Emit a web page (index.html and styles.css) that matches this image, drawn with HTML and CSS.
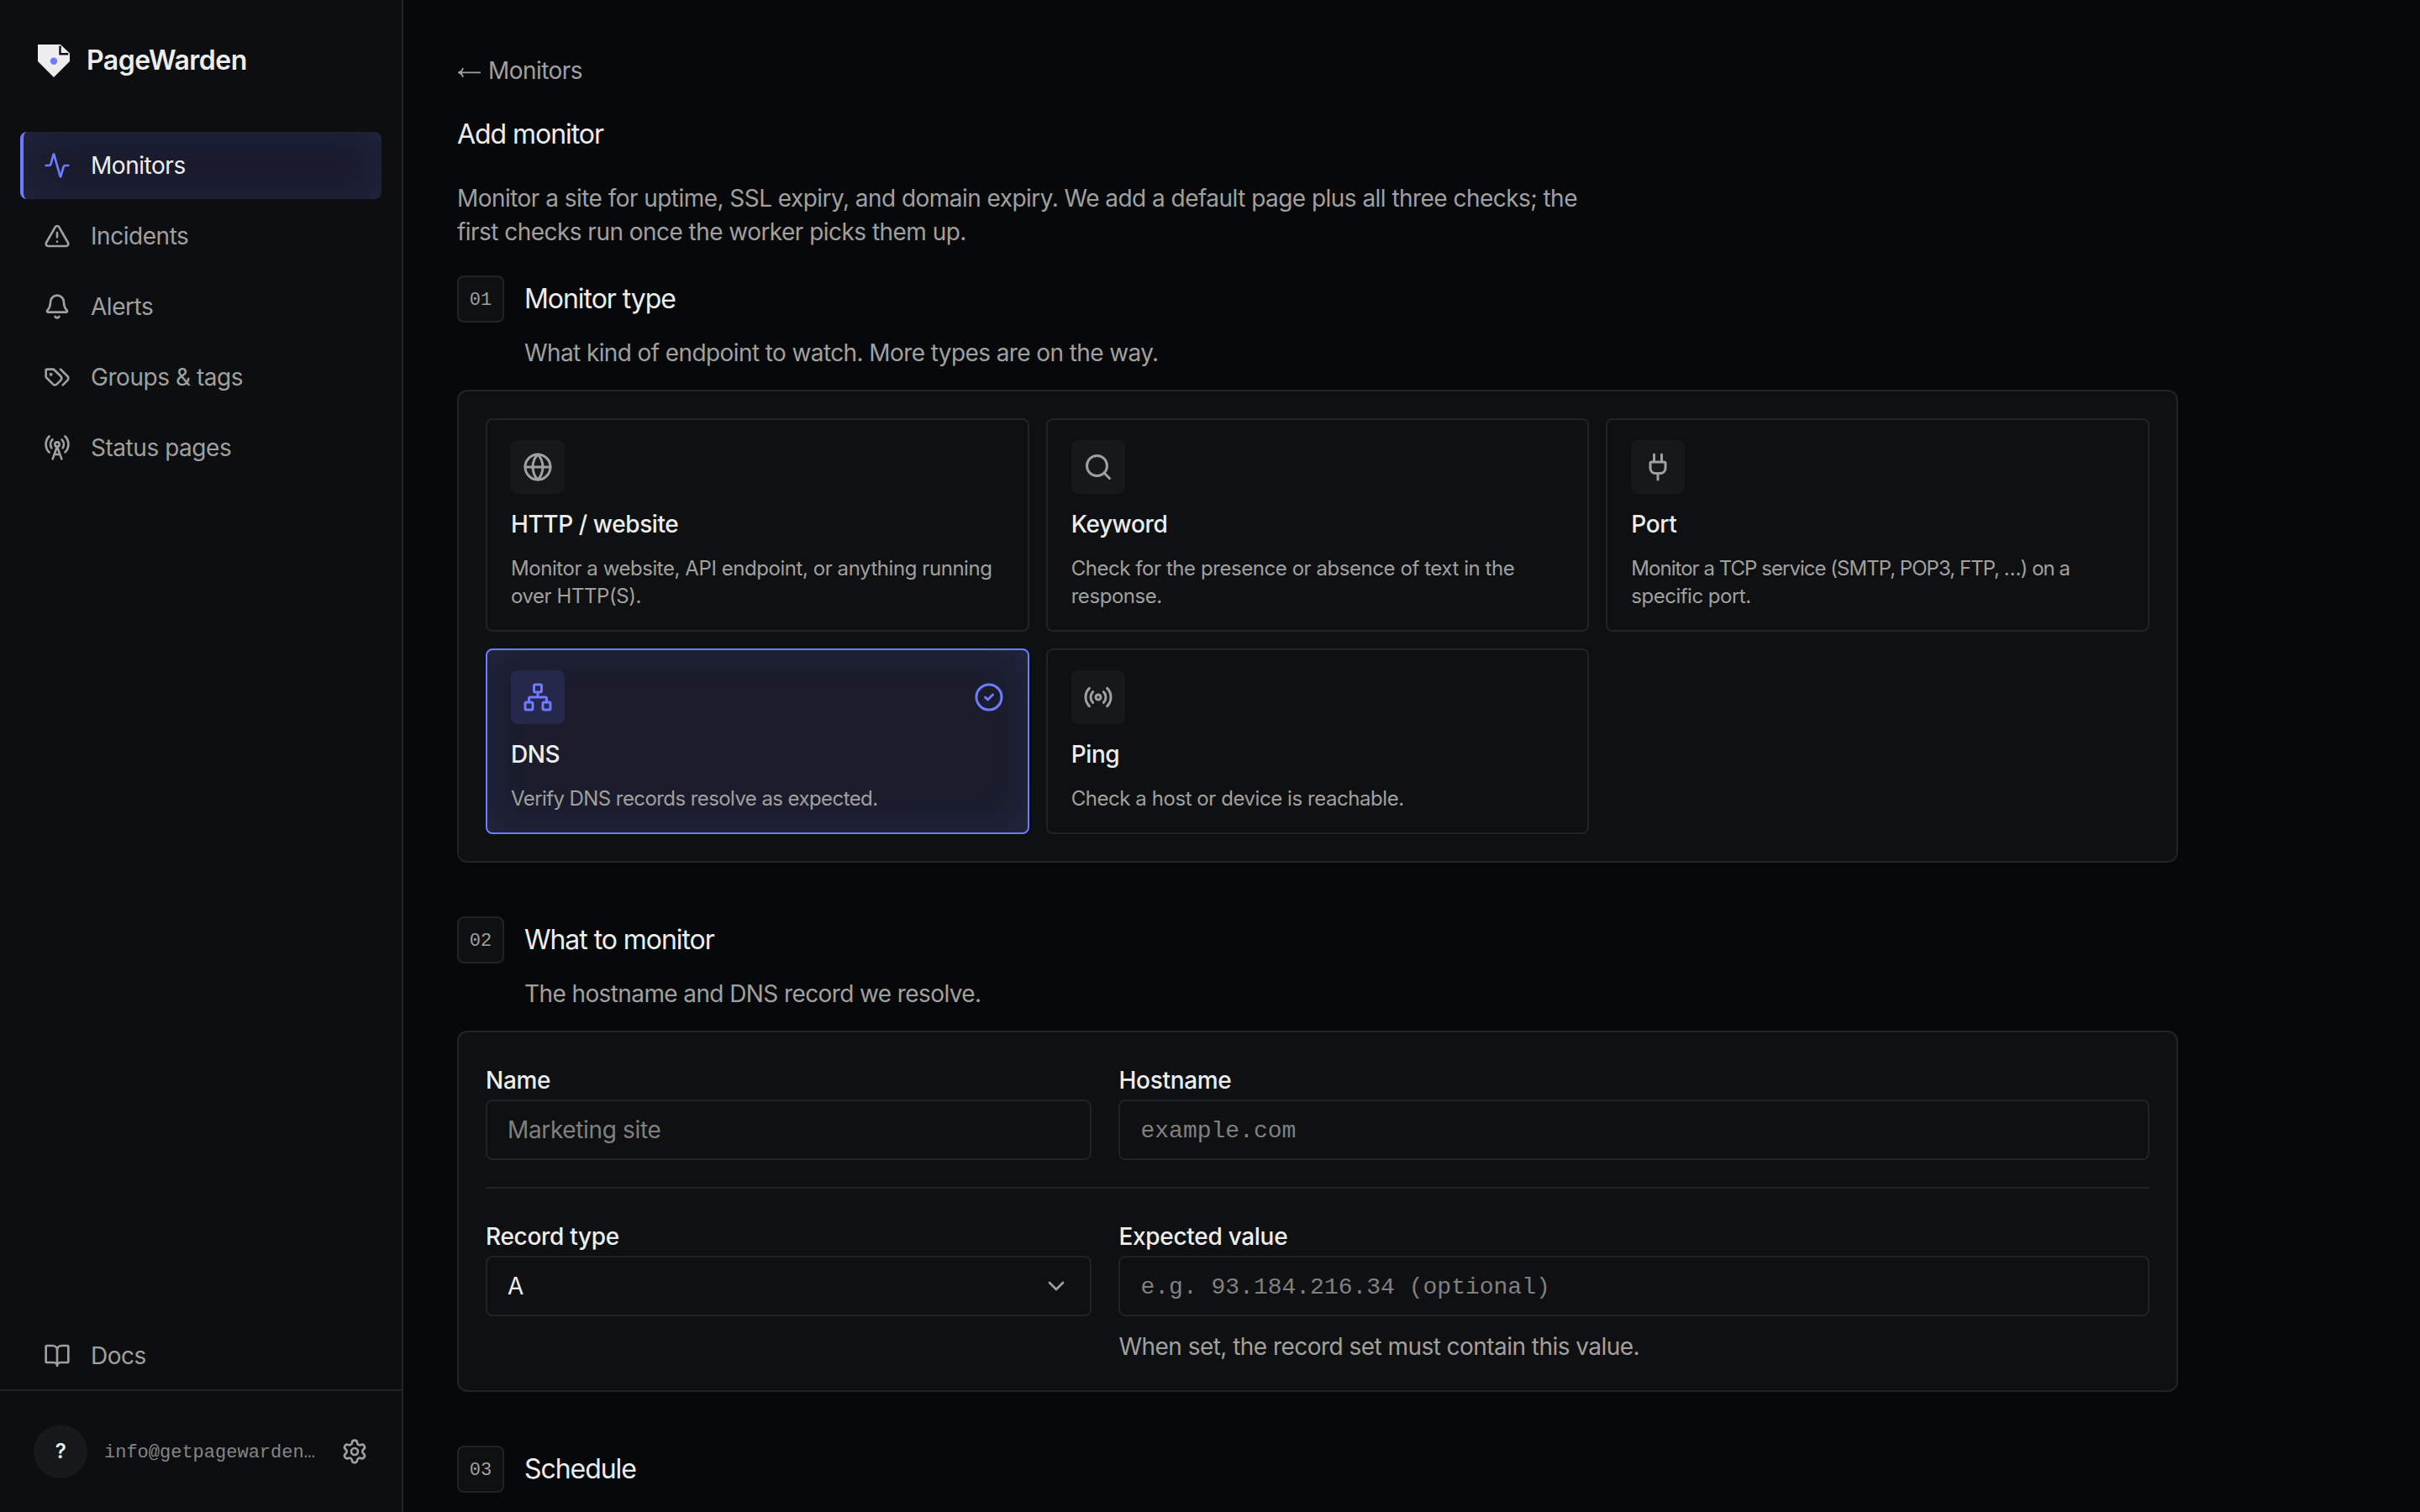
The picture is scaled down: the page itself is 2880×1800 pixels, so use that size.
FILE: index.html
```html
<!DOCTYPE html>
<html lang="en">
  <head>
    <meta charset="UTF-8" />
    <meta name="viewport" content="width=device-width, initial-scale=1.0" />
    <title>Add monitor - PageWarden</title>
    <link rel="stylesheet" href="styles.css">
  </head>
  <body>
    <aside class="sidebar">
      <a class="brand" href="#">
        <svg class="brand-mark" viewBox="0 0 40 40">
          <path d="M1 1h27l11 10.5V21L20 40 1 21z" fill="#ededed" />
          <path d="M27.5 2.6v9.6h9.8" fill="none" stroke="#0c0e0f" stroke-width="2.4" />
          <circle cx="20" cy="20.7" r="4.2" fill="#6e7bff" />
        </svg>
        <span class="brand-name">PageWarden</span>
      </a>

      <nav class="nav">
        <a class="nav-item active" href="#">
          <svg class="icon" viewBox="0 0 24 24"><path d="M22 12h-2.48a2 2 0 0 0-1.93 1.46l-2.35 8.36a.25.25 0 0 1-.48 0L9.24 2.18a.25.25 0 0 0-.48 0l-2.35 8.36A2 2 0 0 1 4.49 12H2" /></svg>
          <span>Monitors</span>
        </a>
        <a class="nav-item" href="#">
          <svg class="icon" viewBox="0 0 24 24"><path d="m21.73 18-8-14a2 2 0 0 0-3.48 0l-8 14A2 2 0 0 0 4 21h16a2 2 0 0 0 1.73-3M12 9v4M12 17h.01" /></svg>
          <span>Incidents</span>
        </a>
        <a class="nav-item" href="#">
          <svg class="icon" viewBox="0 0 24 24"><path d="M10.268 21a2 2 0 0 0 3.464 0M3.262 15.326A1 1 0 0 0 4 17h16a1 1 0 0 0 .74-1.673C19.41 13.956 18 12.499 18 8A6 6 0 0 0 6 8c0 4.499-1.411 5.956-2.738 7.326" /></svg>
          <span>Alerts</span>
        </a>
        <a class="nav-item" href="#">
          <svg class="icon" viewBox="0 0 24 24"><path d="m15 5 6.3 6.3a2.4 2.4 0 0 1 0 3.4L17 19M9.586 5.586A2 2 0 0 0 8.172 5H3a1 1 0 0 0-1 1v5.172a2 2 0 0 0 .586 1.414L8.29 18.29a2.426 2.426 0 0 0 3.42 0l3.58-3.58a2.426 2.426 0 0 0 0-3.42z" /><circle cx="6.5" cy="9.5" r=".5" fill="currentColor" /></svg>
          <span>Groups &amp; tags</span>
        </a>
        <a class="nav-item" href="#">
          <svg class="icon" viewBox="0 0 24 24"><path d="M4.9 16.1C1 12.2 1 5.8 4.9 1.9M7.8 4.7a6.14 6.14 0 0 0-.8 7.5M16.2 4.8c2 2 2.26 5.11.8 7.47M19.1 1.9a9.96 9.96 0 0 1 0 14.1M9.5 18h5M8 22l4-11 4 11" /><circle cx="12" cy="9" r="2" /></svg>
          <span>Status pages</span>
        </a>
      </nav>

      <a class="nav-item docs" href="#">
        <svg class="icon" viewBox="0 0 24 24"><path d="M12 7v14M3 18a1 1 0 0 1-1-1V4a1 1 0 0 1 1-1h5a4 4 0 0 1 4 4 4 4 0 0 1 4-4h5a1 1 0 0 1 1 1v13a1 1 0 0 1-1 1h-6a3 3 0 0 0-3 3 3 3 0 0 0-3-3z" /></svg>
        <span>Docs</span>
      </a>

      <div class="account">
        <span class="avatar">?</span>
        <span class="email">info@getpagewarden…</span>
        <svg class="icon" viewBox="0 0 24 24"><path d="M9.671 4.136a2.34 2.34 0 0 1 4.659 0 2.34 2.34 0 0 0 3.319 1.915 2.34 2.34 0 0 1 2.33 4.033 2.34 2.34 0 0 0 0 3.831 2.34 2.34 0 0 1-2.33 4.033 2.34 2.34 0 0 0-3.319 1.915 2.34 2.34 0 0 1-4.659 0 2.34 2.34 0 0 0-3.32-1.915 2.34 2.34 0 0 1-2.33-4.033 2.34 2.34 0 0 0 0-3.831A2.34 2.34 0 0 1 6.35 6.051a2.34 2.34 0 0 0 3.319-1.915" /><circle cx="12" cy="12" r="3" /></svg>
      </div>
    </aside>

    <main class="main">
      <a class="back" href="#">
        <svg class="back-arrow" viewBox="0 0 28 40"><path d="M28 22.4H1.5M7 17c-.6 2.800-2.500 4.700-5.500 5.400 3 .7 4.900 2.600 5.500 5.400" /></svg>
        Monitors
      </a>
      <h1>Add monitor</h1>
      <p class="intro">
        Monitor a site for uptime, SSL expiry, and domain expiry. We add a
        default page plus all three checks; the first checks run once the
        worker picks them up.
      </p>

      <section class="step">
        <div class="step-head">
          <span class="step-num">01</span>
          <h2>Monitor type</h2>
        </div>
        <p class="step-sub">What kind of endpoint to watch. More types are on the way.</p>

        <div class="panel types">
          <div class="type">
            <span class="tile"><svg class="icon" viewBox="0 0 24 24"><circle cx="12" cy="12" r="10" /><path d="M12 2a14.5 14.5 0 0 0 0 20 14.5 14.5 0 0 0 0-20M2 12h20" /></svg></span>
            <h3>HTTP / website</h3>
            <p>Monitor a website, API endpoint, or anything running over HTTP(S).</p>
          </div>
          <div class="type">
            <span class="tile"><svg class="icon" viewBox="0 0 24 24"><circle cx="11" cy="11" r="8" /><path d="m21 21-4.34-4.34" /></svg></span>
            <h3>Keyword</h3>
            <p>Check for the presence or absence of text in the response.</p>
          </div>
          <div class="type">
            <span class="tile"><svg class="icon" viewBox="0 0 24 24"><path d="M12 22v-5M15 8V2M17 8a1 1 0 0 1 1 1v4a4 4 0 0 1-4 4h-4a4 4 0 0 1-4-4V9a1 1 0 0 1 1-1zM9 8V2" /></svg></span>
            <h3>Port</h3>
            <p class="caps">Monitor a TCP service (SMTP, POP3, FTP, …) on a <span class="line">specific port.</span></p>
          </div>
          <div class="type selected">
            <div class="type-top">
              <span class="tile"><svg class="icon" viewBox="0 0 24 24"><rect x="16" y="16" width="6" height="6" rx="1" /><rect x="2" y="16" width="6" height="6" rx="1" /><rect x="9" y="2" width="6" height="6" rx="1" /><path d="M5 16v-3a1 1 0 0 1 1-1h12a1 1 0 0 1 1 1v3M12 12V8" /></svg></span>
              <svg class="icon" viewBox="0 0 24 24"><circle cx="12" cy="12" r="10" /><path d="m9 12 2 2 4-4" /></svg>
            </div>
            <h3>DNS</h3>
            <p>Verify DNS records resolve as expected.</p>
          </div>
          <div class="type">
            <span class="tile"><svg class="icon" viewBox="0 0 24 24"><path d="M16.247 7.761a6 6 0 0 1 0 8.478M19.075 4.933a10 10 0 0 1 0 14.134M4.925 19.067a10 10 0 0 1 0-14.134M7.753 16.239a6 6 0 0 1 0-8.478" /><circle cx="12" cy="12" r="2" /></svg></span>
            <h3>Ping</h3>
            <p>Check a host or device is reachable.</p>
          </div>
        </div>
      </section>

      <section class="step">
        <div class="step-head">
          <span class="step-num">02</span>
          <h2>What to monitor</h2>
        </div>
        <p class="step-sub">The hostname and DNS record we resolve.</p>

        <div class="panel">
          <div class="fields">
            <div class="field">
              <label>Name</label>
              <div class="control placeholder">Marketing site</div>
            </div>
            <div class="field">
              <label>Hostname</label>
              <div class="control placeholder mono">example.com</div>
            </div>
          </div>
          <div class="fields">
            <div class="field">
              <label>Record type</label>
              <div class="control">
                A
                <svg class="icon" viewBox="0 0 24 24"><path d="m6 9 6 6 6-6" /></svg>
              </div>
            </div>
            <div class="field">
              <label>Expected value</label>
              <div class="control placeholder mono">e.g. 93.184.216.34 (optional)</div>
              <p class="help">When set, the record set must contain this value.</p>
            </div>
          </div>
        </div>
      </section>

      <section class="step">
        <div class="step-head">
          <span class="step-num">03</span>
          <h2>Schedule</h2>
        </div>
      </section>
    </main>
  </body>
</html>
```
FILE: styles.css
```css
* {
  margin: 0;
  padding: 0;
  box-sizing: border-box;
}

body {
  display: flex;
  height: 100vh;
  overflow: hidden;
  background-color: #07080a;
  color: #ededed;
  font-family: Inter, "Liberation Sans", sans-serif;
  font-size: 28px;
  line-height: 40px;
  letter-spacing: -0.54px;
}

a {
  color: inherit;
  text-decoration: none;
}

.icon {
  flex: none;
  width: 32px;
  height: 32px;
  fill: none;
  stroke: currentColor;
  stroke-width: 2;
  stroke-linecap: round;
  stroke-linejoin: round;
}

/* Sidebar */
.sidebar {
  display: flex;
  flex-direction: column;
  flex: none;
  width: 480px;
  background-color: #0c0e0f;
  border-right: 2px solid #212325;
}

.brand {
  display: flex;
  align-items: center;
  gap: 19px;
  padding: 52px 44px 65px;
}

.brand-mark {
  width: 40px;
  height: 40px;
}

.brand-name {
  font-size: 32px;
  font-weight: 600;
  letter-spacing: -0.5px;
}

.nav {
  display: flex;
  flex-direction: column;
  gap: 4px;
  padding-right: 24px;
  margin-bottom: auto;
}

.nav-item {
  display: flex;
  align-items: center;
  gap: 24px;
  height: 80px;
  margin-left: 24px;
  padding-left: 24px;
  border-left: 4px solid transparent;
  border-radius: 8px;
  color: #a0a0a0;
  letter-spacing: -0.46px;
}

.nav-item.active {
  border-left-color: #6e7bff;
  background-color: #1a1b2c;
  box-shadow: inset 0 0 48px rgba(110, 123, 255, 0.1);
  color: #ededed;
}

.nav-item.active .icon {
  color: #6e7bff;
}

.account {
  display: flex;
  align-items: center;
  gap: 20px;
  padding: 40px;
  border-top: 2px solid #212325;
  color: #a0a0a0;
}

.avatar {
  display: flex;
  align-items: center;
  justify-content: center;
  width: 64px;
  height: 64px;
  border-radius: 50%;
  background-color: #15191b;
  color: #ededed;
  font-size: 24px;
  font-weight: 600;
}

.email {
  flex: 1;
  padding-top: 3px;
  white-space: nowrap;
  color: #858585;
  font-family: "Liberation Mono", monospace;
  font-size: 22px;
  letter-spacing: 0;
}

/* Main column */
.main {
  flex: none;
  width: 2112px;
  padding: 64px 0 0 64px;
}

.back,
.intro,
.step-sub,
.help {
  color: #a0a0a0;
}

.back {
  display: flex;
  gap: 9px;
}

.back-arrow {
  width: 28px;
  height: 40px;
  fill: none;
  stroke: currentColor;
  stroke-width: 1.8;
}

h1,
h2 {
  font-size: 32px;
  font-weight: 400;
  letter-spacing: -1.05px;
}

h1 {
  margin: 36px 0;
}

.intro {
  max-width: 1360px;
}

.step {
  margin-top: 32px;
}

.step + .step {
  margin-top: 64px;
}

.step-head {
  display: flex;
  align-items: center;
  gap: 24px;
}

.step-num {
  display: flex;
  align-items: center;
  justify-content: center;
  width: 56px;
  height: 56px;
  padding-top: 3px;
  border: 2px solid #212325;
  border-radius: 8px;
  background-color: #0f1012;
  color: #a0a0a0;
  font-family: "Liberation Mono", monospace;
  font-size: 22px;
  letter-spacing: 0;
}

.step-sub {
  margin: 16px 0 24px 80px;
  letter-spacing: -0.6px;
}

.panel {
  padding: 32px;
  border: 2px solid #212325;
  border-radius: 12px;
  background-color: #0f1012;
}

/* Monitor types */
.types {
  display: grid;
  grid-template-columns: repeat(3, 1fr);
  gap: 20px;
}

.type {
  padding: 24px 28px;
  border: 2px solid #212325;
  border-radius: 8px;
}

.type h3 {
  margin: 16px 0;
  font-size: 28px;
  font-weight: 500;
  letter-spacing: -0.4px;
}

.type p {
  color: #a0a0a0;
  font-size: 24px;
  line-height: 33px;
  letter-spacing: -0.44px;
}

.type p.caps {
  letter-spacing: -0.97px;
}

.caps .line {
  display: block;
  letter-spacing: -0.5px;
}

.type-top {
  display: flex;
  align-items: center;
  justify-content: space-between;
}

.type .icon {
  width: 36px;
  height: 36px;
}

.tile {
  display: flex;
  align-items: center;
  justify-content: center;
  width: 64px;
  height: 64px;
  border-radius: 8px;
  background-color: #15191b;
  color: #a0a0a0;
}

.type.selected {
  border-color: #6e7bff;
  background-color: #1b1d2d;
  box-shadow: inset 0 0 48px rgba(110, 123, 255, 0.1);
}

.type.selected p {
  letter-spacing: -0.58px;
}

.selected .tile {
  background-color: #25284a;
}

.selected .icon {
  color: #6e7bff;
}

/* Form fields */
.fields {
  display: grid;
  grid-template-columns: 1fr 1.7fr;
  gap: 32px;
}

.fields + .fields {
  margin-top: 32px;
  padding-top: 32px;
  border-top: 2px solid #212325;
}

.field label {
  display: block;
  height: 48px;
  line-height: 51px;
  font-weight: 500;
  letter-spacing: -0.3px;
}

.control {
  display: flex;
  align-items: center;
  justify-content: space-between;
  height: 72px;
  padding: 0 24px;
  border: 2px solid #212325;
  border-radius: 8px;
  letter-spacing: -0.35px;
}

.control.placeholder {
  color: #808080;
}

.control.mono {
  padding-top: 3px;
  font-family: "Liberation Mono", monospace;
  letter-spacing: 0;
}

.control .icon {
  color: #a0a0a0;
}

.help {
  margin-top: 16px;
}
```
